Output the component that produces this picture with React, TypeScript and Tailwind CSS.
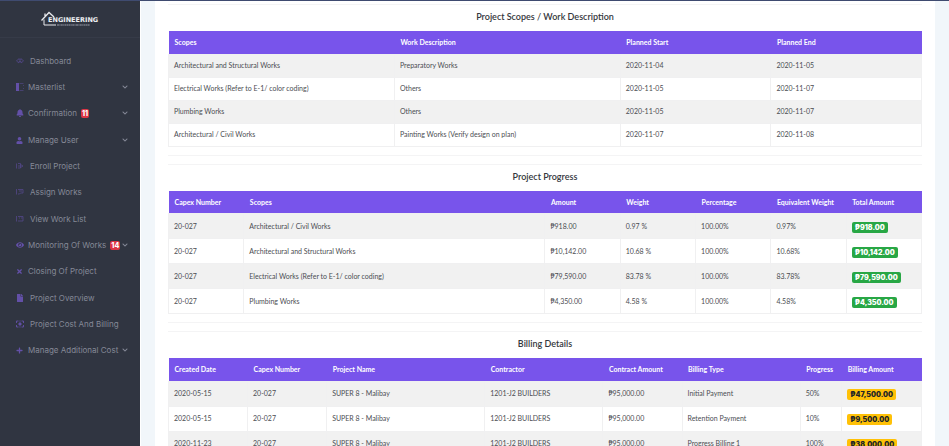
import type { ReactNode } from "react";
import { FaBell, FaUser, FaEye, FaTimes, FaFile, FaPlus, FaChevronDown } from "react-icons/fa";

type Item = { label: string; icon: ReactNode; wide?: boolean; menu?: boolean; badge?: string };

const strokeIcon = (d: string) => (
  <svg viewBox="0 0 16 16" className="size-2 opacity-70" fill="none" stroke="currentColor" strokeWidth="1.6">
    <path d={d} />
  </svg>
);

const groups: Item[][] = [
  [
    { label: "Dashboard", wide: true, icon: strokeIcon("M6 3 1 8l5 4V9h4v3l5-4-5-5v3H6z") },
    {
      label: "Masterlist",
      menu: true,
      icon: (
        <svg viewBox="0 0 16 16" className="size-2">
          <path d="M0 0h6v16H0z" fill="currentColor" />
          <path d="M7 1h8M7 15h8M15 4v2M15 10v2" stroke="currentColor" strokeOpacity="0.6" strokeWidth="1.5" />
        </svg>
      ),
    },
    { label: "Confirmation", menu: true, badge: "11", icon: <FaBell className="size-2" /> },
  ],
  [
    { label: "Manage User", menu: true, icon: <FaUser className="size-[7px]" /> },
    { label: "Enroll Project", wide: true, icon: strokeIcon("M1 3v10M4 3h5v9H4M9 5l5 3-5 3M4 8h5") },
    { label: "Assign Works", wide: true, icon: strokeIcon("M1 2v11M4 3h10v7H9l-2 2H4M6 6h6") },
  ],
  [
    { label: "View Work List", wide: true, icon: strokeIcon("M1 2v11M4 3h10v9H4M6 6h2M10 6h3") },
    { label: "Monitoring Of Works", menu: true, badge: "14", icon: <FaEye className="size-2" /> },
    { label: "Closing Of Project", icon: <FaTimes className="size-[7px]" /> },
  ],
  [
    { label: "Project Overview", wide: true, icon: <FaFile className="size-2" /> },
    {
      label: "Project Cost And Billing",
      wide: true,
      icon: (
        <svg viewBox="0 0 16 16" className="size-2" fill="none" stroke="currentColor" strokeWidth="1.8">
          <path d="M1 6V2h4M7 2h2M11 2h4v4M15 10v4h-4M9 14H7M5 14H1v-4" />
          <circle cx="8" cy="8" r="2.4" fill="currentColor" />
        </svg>
      ),
    },
    { label: "Manage Additional Cost", menu: true, icon: <FaPlus className="size-[7px]" /> },
  ],
];

function NavItem({ item }: { item: Item }) {
  const cls = "flex h-[26px] w-full items-center pl-4 pr-3 text-left whitespace-nowrap";
  const body = (
    <>
      <span className={item.wide ? "w-[14px] shrink-0 text-[#6350a8]" : "w-3 shrink-0 text-[#6350a8]"}>{item.icon}</span>
      <span>{item.label}</span>
      {item.badge && (
        <span className="ml-1 rounded-[2px] bg-[#dc3545] px-px text-[7px] leading-[9px] font-extrabold text-white">
          {item.badge}
        </span>
      )}
      {item.menu && <FaChevronDown className="ml-auto size-[6px] shrink-0" />}
    </>
  );
  return item.menu ? (
    <button type="button" className={cls}>{body}</button>
  ) : (
    <a href="#" className={cls}>{body}</a>
  );
}

function Logo() {
  return (
    <svg viewBox="0 0 58 16" className="h-4 w-[58px]" role="img" aria-label="Engineering">
      <path d="M3 8.500v5.500h12" fill="none" stroke="#e8eaee" strokeWidth="1" />
      <path d="M0.500 9.500 8 1.500l5 4.500M4 5V2.500" fill="none" stroke="#e8eaee" strokeWidth="1.3" />
      <text x="7" y="11" fill="#eceef2" className="font-['DejaVu_Sans'] text-[6.5px] font-bold">ENGINEERING</text>
      <path d="M16 14h33" stroke="#9b9fab" strokeWidth="1.2" strokeDasharray="2 0.4 1 0.4" />
    </svg>
  );
}

type Tone = "success" | "warning";

function DataTable({ widths, head, rows, tone }: { widths: string[]; head: string[]; rows: string[][]; tone?: Tone }) {
  const rowHeight = tone ? "h-[25px]" : "h-[23px]";
  const badge = tone === "success" ? "bg-[#28a745] text-white" : "bg-[#ffc107] text-[#212529]";
  return (
    <table className="w-full table-fixed border-collapse text-left text-[7px] leading-[10px]">
      <colgroup>
        {widths.map((w, i) => (
          <col key={i} className={w} />
        ))}
      </colgroup>
      <thead>
        <tr className="h-[23px] bg-[#7854eb] text-white">
          {head.map((h) => (
            <th key={h} scope="col" className="px-[6px] font-bold whitespace-nowrap">{h}</th>
          ))}
        </tr>
      </thead>
      <tbody>
        {rows.map((r, i) => (
          <tr key={i} className={`${rowHeight} odd:bg-[#f1f1f1]`}>
            {r.map((c, j) => (
              <td key={j} className="border border-[#f0f0f1] px-[5px] pt-0 pb-px whitespace-nowrap">
                {tone && j === r.length - 1 ? (
                  <span className={`mt-[3px] inline-block rounded-[2px] px-[3px] font-[Inter] text-[7px] leading-[11px] font-black ${badge}`}>{c}</span>
                ) : (
                  c
                )}
              </td>
            ))}
          </tr>
        ))}
      </tbody>
    </table>
  );
}

function Section({ title, children }: { title: string; children: ReactNode }) {
  return (
    <section className="mb-2 border-t border-[#f4f4f5]">
      <h2 className="flex h-[26px] items-center justify-center pb-[2px] text-[9px] font-semibold text-[#34373c]">{title}</h2>
      {children}
      <hr className="mt-2 border-[#f4f4f5]" />
    </section>
  );
}

export default function App() {
  return (
    <div className="flex h-screen overflow-hidden border-t border-[#3f4b70] bg-[#f1f6fa] font-[Lato,'Noto_Sans',sans-serif] text-[#4b4d52]">
      <aside className="w-[140px] shrink-0 bg-[#303541] font-[Inter,sans-serif] text-[8px] text-[#858997]">
        <div className="flex h-[37px] items-center justify-center border-b border-[#363b48]">
          <Logo />
        </div>
        <nav className="flex flex-col gap-px pt-[10px]">
          {groups.map((g, i) => (
            <div key={i}>
              {g.map((it) => (
                <NavItem key={it.label} item={it} />
              ))}
            </div>
          ))}
        </nav>
      </aside>
      <main className="min-w-0 flex-1 border-l border-white pr-[14px] pl-[14px]">
        <div className="min-h-full bg-white px-[13px] pt-[3px]">
          <Section title="Project Scopes / Work Description">
            <DataTable
              widths={["w-[30%]", "w-[30%]", "w-[20%]", "w-[20%]"]}
              head={["Scopes", "Work Description", "Planned Start", "Planned End"]}
              rows={[
                ["Architectural and Structural Works", "Preparatory Works", "2020-11-04", "2020-11-05"],
                ["Electrical Works (Refer to E-1/ color coding)", "Others", "2020-11-05", "2020-11-07"],
                ["Plumbing Works", "Others", "2020-11-05", "2020-11-07"],
                ["Architectural / Civil Works", "Painting Works (Verify design on plan)", "2020-11-07", "2020-11-08"],
              ]}
            />
          </Section>
          <Section title="Project Progress">
            <DataTable
              tone="success"
              widths={["w-[10%]", "w-[40%]", "w-[10%]", "w-[10%]", "w-[10%]", "w-[10%]", "w-[10%]"]}
              head={["Capex Number", "Scopes", "Amount", "Weight", "Percentage", "Equivalent Weight", "Total Amount"]}
              rows={[
                ["20-027", "Architectural / Civil Works", "₱918.00", "0.97 %", "100.00%", "0.97%", "₱918.00"],
                ["20-027", "Architectural and Structural Works", "₱10,142.00", "10.68 %", "100.00%", "10.68%", "₱10,142.00"],
                ["20-027", "Electrical Works (Refer to E-1/ color coding)", "₱79,590.00", "83.78 %", "100.00%", "83.78%", "₱79,590.00"],
                ["20-027", "Plumbing Works", "₱4,350.00", "4.58 %", "100.00%", "4.58%", "₱4,350.00"],
              ]}
            />
          </Section>
          <Section title="Billing Details">
            <DataTable
              tone="warning"
              widths={["w-[10.5%]", "w-[10.5%]", "w-[21%]", "w-[15.7%]", "w-[10.5%]", "w-[15.7%]", "w-[5.5%]", "w-[10.6%]"]}
              head={["Created Date", "Capex Number", "Project Name", "Contractor", "Contract Amount", "Billing Type", "Progress", "Billing Amount"]}
              rows={[
                ["2020-05-15", "20-027", "SUPER 8 - Malibay", "1201-J2 BUILDERS", "₱95,000.00", "Initial Payment", "50%", "₱47,500.00"],
                ["2020-05-15", "20-027", "SUPER 8 - Malibay", "1201-J2 BUILDERS", "₱95,000.00", "Retention Payment", "10%", "₱9,500.00"],
                ["2020-11-23", "20-027", "SUPER 8 - Malibay", "1201-J2 BUILDERS", "₱95,000.00", "Progress Billing 1", "100%", "₱38,000.00"],
              ]}
            />
          </Section>
        </div>
      </main>
    </div>
  );
}
